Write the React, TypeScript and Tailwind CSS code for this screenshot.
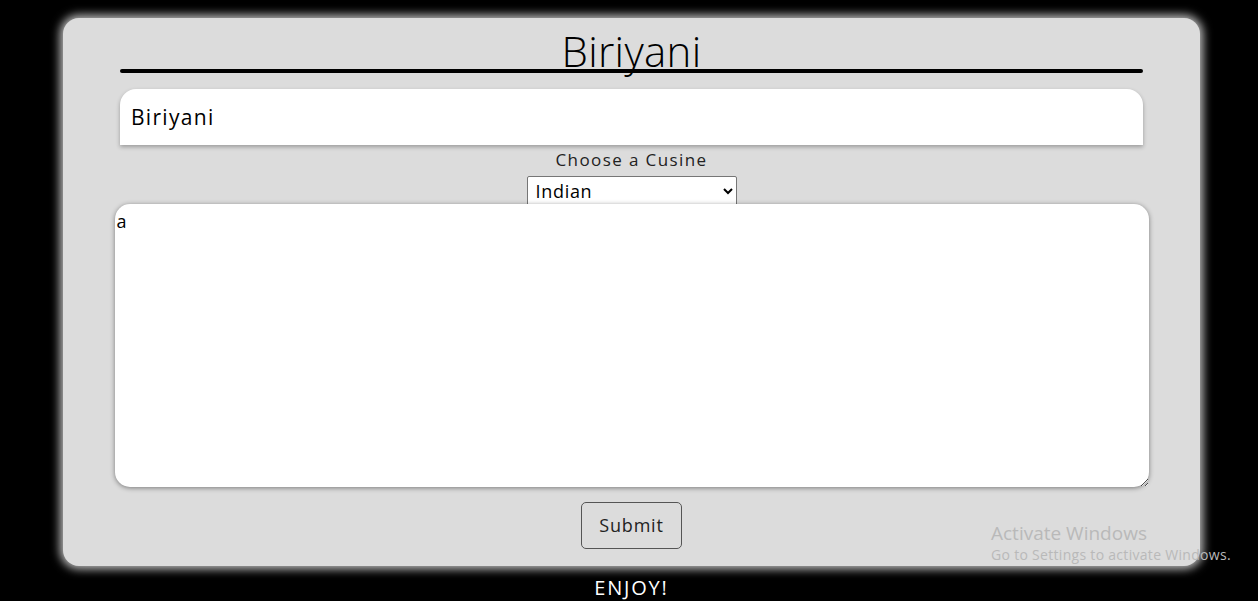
import React from 'react';

const font = { fontFamily: '"Open Sans", "Noto Sans", sans-serif' };

export default function App() {
	return (
		<div
			className="relative w-full min-h-[601px] bg-black pt-[18px] flex flex-col items-start pl-[63px]"
			style={font}
		>
			<div className="w-[1137px] h-[548px] rounded-[16px] bg-[#dcdcdc] shadow-[0_0_10px_3px_rgba(255,255,255,0.75)] flex flex-col items-center px-[57px]">
				<h1 className="mt-[12px] text-[42px] leading-none font-light tracking-[0.3px] text-black">
					Biriyani
				</h1>
				<div className="w-full h-[4px] -mt-[3px] rounded-full bg-black" />

				<input
					type="text"
					defaultValue="Biriyani"
					className="mt-[16px] w-full h-[56px] rounded-t-[16px] bg-white pl-[11px] text-[21px] tracking-[1.3px] text-black outline-none shadow-[0_2px_4px_rgba(0,0,0,0.3)]"
				/>

				<label className="mt-[3px] text-[17px] leading-[24px] tracking-[1.4px] text-[#222]">
					Choose a Cusine
				</label>
				<select className="mt-[4px] w-[210px] h-[30px] border border-[#767676] rounded-[2px] bg-white pl-[4px] text-[18px] tracking-[0.7px] text-black">
					<option>Indian</option>
					<option>Chinese</option>
					<option>Italian</option>
				</select>

				<textarea
					defaultValue="a"
					autoFocus
					onFocus={(e) => {
						const el = e.currentTarget;
						el.setSelectionRange(el.value.length, el.value.length);
					}}
					className="-mt-[2px] w-[1034px] h-[283px] rounded-[15px] bg-white px-[2px] pt-[5px] text-[18px] leading-[24px] text-black caret-black outline-none shadow-[0_1px_5px_rgba(0,0,0,0.45)]"
				/>

				<button className="mt-[15px] w-[101px] h-[47px] rounded-[5px] border border-[#555] text-[18px] tracking-[0.8px] text-[#222]">
					Submit
				</button>
			</div>

			<p className="mt-[8px] w-[1137px] text-center text-[20px] leading-[28px] tracking-[1.8px] text-white">
				ENJOY!
			</p>

			<div className="absolute left-[991px] top-[520px] text-[#b9b9b9] pointer-events-none">
				<div className="text-[19px] leading-[26px]">Activate Windows</div>
				<div className="text-[14px] leading-[18px] tracking-[0.3px]">
					Go to Settings to activate Windows.
				</div>
			</div>
		</div>
	);
}
